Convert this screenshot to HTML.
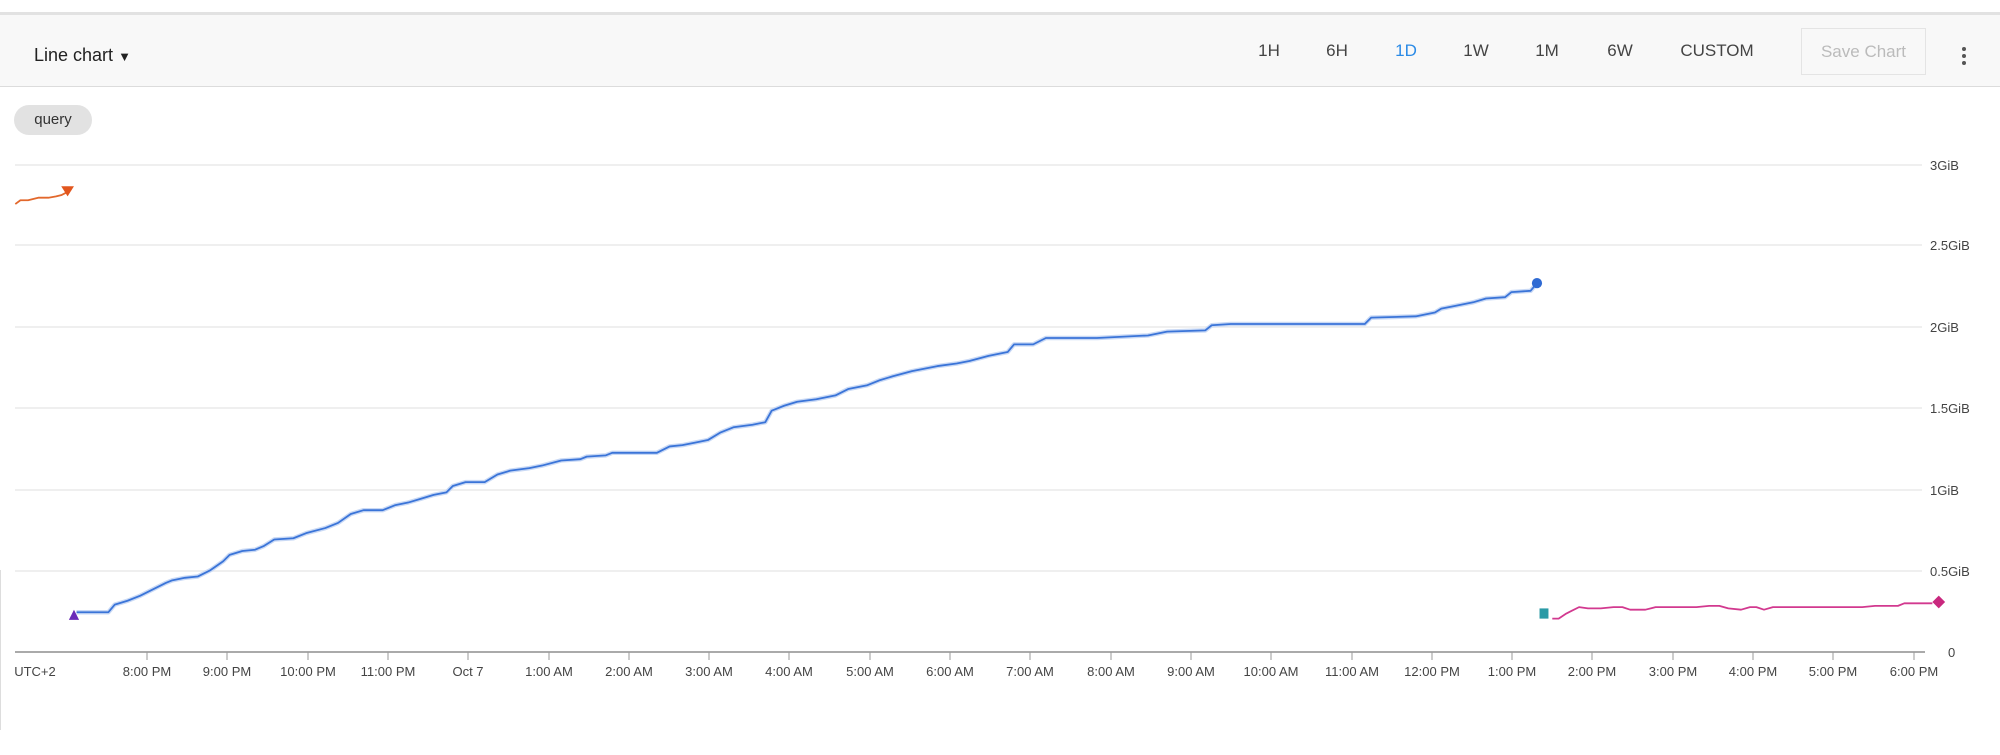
<!DOCTYPE html>
<html><head><meta charset="utf-8"><style>
html,body{margin:0;padding:0;background:#fff;width:2000px;height:755px;overflow:hidden;font-family:"Liberation Sans",sans-serif;}
.bar{position:absolute;left:0;top:12px;width:2000px;height:75px;background:#f8f8f8;border-top:3px solid #e2e2e2;border-bottom:1px solid #dcdcdc;box-sizing:border-box;}
.t{position:absolute;font-size:17px;color:#444;transform:translateX(-50%);top:41px}
</style></head><body>
<div class="bar"></div>
<div style="position:absolute;left:34px;top:45px;font-size:18px;color:#222">Line chart <span style="font-size:13px">&#9660;</span></div>
<div class="t" style="left:1269px">1H</div>
<div class="t" style="left:1337px">6H</div>
<div class="t" style="left:1406px;color:#2a8ae6">1D</div>
<div class="t" style="left:1476px">1W</div>
<div class="t" style="left:1547px">1M</div>
<div class="t" style="left:1620px">6W</div>
<div class="t" style="left:1717px">CUSTOM</div>
<div style="position:absolute;left:1801px;top:28px;width:125px;height:47px;border:1px solid #e4e4e4;box-sizing:border-box;font-size:17px;color:#bbb;text-align:center;line-height:45px">Save Chart</div>
<div style="position:absolute;left:1962px;top:47px;width:4px">
<div style="width:4px;height:4px;border-radius:2px;background:#555;margin-bottom:3px"></div>
<div style="width:4px;height:4px;border-radius:2px;background:#555;margin-bottom:3px"></div>
<div style="width:4px;height:4px;border-radius:2px;background:#555"></div></div>
<div style="position:absolute;left:14px;top:105px;width:78px;height:30px;border-radius:15px;background:#e2e2e2;font-size:15px;color:#333;text-align:center;line-height:29px">query</div>
<div style="position:absolute;left:0;top:570px;width:1px;height:160px;background:#ddd"></div>
<svg width="2000" height="755" style="position:absolute;left:0;top:0" font-family="Liberation Sans, sans-serif">
<g stroke="#efefef" stroke-width="2">
<line x1="15" y1="165" x2="1922" y2="165"/><line x1="15" y1="245" x2="1922" y2="245"/>
<line x1="15" y1="327" x2="1922" y2="327"/><line x1="15" y1="408" x2="1922" y2="408"/>
<line x1="15" y1="490" x2="1922" y2="490"/><line x1="15" y1="571" x2="1922" y2="571"/>
</g>
<line x1="15" y1="652" x2="1925" y2="652" stroke="#aaa" stroke-width="2"/>
<g font-size="13" fill="#444">
<text x="1930" y="170">3GiB</text><text x="1930" y="250">2.5GiB</text><text x="1930" y="332">2GiB</text>
<text x="1930" y="413">1.5GiB</text><text x="1930" y="495">1GiB</text><text x="1930" y="576">0.5GiB</text><text x="1948" y="657">0</text>
</g>
<g font-size="13" fill="#444" text-anchor="middle">
<text x="35" y="676">UTC+2</text>
<text x="147" y="676">8:00 PM</text><text x="227" y="676">9:00 PM</text><text x="308" y="676">10:00 PM</text><text x="388" y="676">11:00 PM</text>
<text x="468" y="676">Oct 7</text><text x="549" y="676">1:00 AM</text><text x="629" y="676">2:00 AM</text><text x="709" y="676">3:00 AM</text>
<text x="789" y="676">4:00 AM</text><text x="870" y="676">5:00 AM</text><text x="950" y="676">6:00 AM</text><text x="1030" y="676">7:00 AM</text>
<text x="1111" y="676">8:00 AM</text><text x="1191" y="676">9:00 AM</text><text x="1271" y="676">10:00 AM</text><text x="1352" y="676">11:00 AM</text>
<text x="1432" y="676">12:00 PM</text><text x="1512" y="676">1:00 PM</text><text x="1592" y="676">2:00 PM</text><text x="1673" y="676">3:00 PM</text>
<text x="1753" y="676">4:00 PM</text><text x="1833" y="676">5:00 PM</text><text x="1914" y="676">6:00 PM</text>
</g>
<path stroke="#999" stroke-width="1" d="M147 652v8M227 652v8M308 652v8M388 652v8M468 652v8M549 652v8M629 652v8M709 652v8M789 652v8M870 652v8M950 652v8M1030 652v8M1111 652v8M1191 652v8M1271 652v8M1352 652v8M1432 652v8M1512 652v8M1592 652v8M1673 652v8M1753 652v8M1833 652v8M1914 652v8"/>
<g transform="scale(1.2755)" fill="none" stroke-linejoin="round">
<polyline stroke="#e2682c" stroke-width="1.4" points="12,160 16,157 22,157 30,155 38,155 44,154 48,153 52,151"/>
<polygon points="48,146 58,146 53,154" fill="#e2561e" stroke="none"/>
<polyline stroke="#c9d9f5" stroke-width="3.5" points="60,480 85,480 90,474 100,471 110,467 120,462 130,457 135,455 145,453 155,452 165,447 175,440 180,435 190,432 200,431 207,428 215,423 230,422 240,418 255,414 265,410 275,403 285,400 300,400 310,396 320,394 330,391 340,388 350,386 355,381 365,378 380,378 390,372 400,369 415,367 425,365 440,361 455,360 460,358 475,357 480,355 515,355 525,350 535,349 545,347 555,345 565,339 575,335 590,333 600,331 605,322 615,318 625,315 640,313 655,310 665,305 680,302 690,298 700,295 715,291 735,287 750,285 760,283 775,279 790,276 795,270 810,270 820,265 860,265 900,263 915,260 945,259 950,255 965,254 1070,254 1075,249 1110,248 1125,245 1130,242 1140,240 1155,237 1165,234 1180,233 1185,229 1200,228 1205,222"/>
<polyline stroke="#3a74d8" stroke-width="1.4" points="60,480 85,480 90,474 100,471 110,467 120,462 130,457 135,455 145,453 155,452 165,447 175,440 180,435 190,432 200,431 207,428 215,423 230,422 240,418 255,414 265,410 275,403 285,400 300,400 310,396 320,394 330,391 340,388 350,386 355,381 365,378 380,378 390,372 400,369 415,367 425,365 440,361 455,360 460,358 475,357 480,355 515,355 525,350 535,349 545,347 555,345 565,339 575,335 590,333 600,331 605,322 615,318 625,315 640,313 655,310 665,305 680,302 690,298 700,295 715,291 735,287 750,285 760,283 775,279 790,276 795,270 810,270 820,265 860,265 900,263 915,260 945,259 950,255 965,254 1070,254 1075,249 1110,248 1125,245 1130,242 1140,240 1155,237 1165,234 1180,233 1185,229 1200,228 1205,222"/>
<polygon points="54,486 62,486 58,478" fill="#6a2bb8" stroke="none"/>
<circle cx="1205" cy="222" r="4" fill="#2f6ad3" stroke="none"/>
<rect x="1207" y="477" width="7" height="8" fill="#2a9aa6" stroke="none"/>
<polyline stroke="#d2398f" stroke-width="1.4" points="1217,485 1222,485 1228,481 1232,479 1238,476 1245,477 1255,477 1265,476 1272,476 1278,478 1290,478 1298,476 1320,476 1330,476 1340,475 1348,475 1355,477 1365,478 1372,476 1377,476 1383,478 1390,476 1460,476 1470,475 1488,475 1493,473 1515,473"/>
<polygon points="1520,467 1525,472 1520,477 1515,472" fill="#c9287e" stroke="none"/>
</g>
</svg>
</body></html>
